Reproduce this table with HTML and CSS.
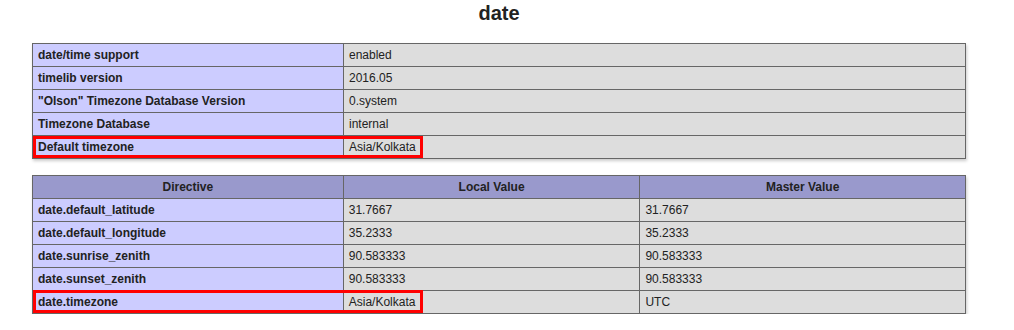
FILE: index.html
```html
<!DOCTYPE html>
<html>
<head>
<meta charset="utf-8">
<title>phpinfo - date</title>
<link rel="stylesheet" href="styles.css">
</head>
<body>
<div class="center">
  <h2 class="title">date</h2>
  <div class="wrap first">
    <table>
      <tr><td class="e">date/time support</td><td class="v">enabled</td></tr>
      <tr><td class="e">timelib version</td><td class="v">2016.05</td></tr>
      <tr><td class="e">"Olson" Timezone Database Version</td><td class="v">0.system</td></tr>
      <tr><td class="e">Timezone Database</td><td class="v">internal</td></tr>
      <tr><td class="e">Default timezone</td><td class="v">Asia/Kolkata</td></tr>
    </table>
    <div class="mark"></div>
  </div>
  <div class="wrap second">
    <table>
      <tr class="h"><th class="c1">Directive</th><th class="c2">Local Value</th><th class="c3">Master Value</th></tr>
      <tr><td class="e">date.default_latitude</td><td class="v">31.7667</td><td class="v">31.7667</td></tr>
      <tr><td class="e">date.default_longitude</td><td class="v">35.2333</td><td class="v">35.2333</td></tr>
      <tr><td class="e">date.sunrise_zenith</td><td class="v">90.583333</td><td class="v">90.583333</td></tr>
      <tr><td class="e">date.sunset_zenith</td><td class="v">90.583333</td><td class="v">90.583333</td></tr>
      <tr><td class="e">date.timezone</td><td class="v">Asia/Kolkata</td><td class="v">UTC</td></tr>
    </table>
    <div class="mark mark-tall"></div>
  </div>
</div>
</body>
</html>
```
FILE: styles.css
```css
html, body {
  margin: 0;
  padding: 0;
  background: #fff;
}
body {
  color: #222;
  font-family: "Liberation Sans", Arial, sans-serif;
}
.center {
  width: 998px;
  padding-top: 2px;
  text-align: center;
}
.title {
  margin: 0 0 18px;
  font-size: 20px;
  font-weight: bold;
  line-height: 23px;
}
.wrap {
  position: relative;
  width: 934px;
  margin: 0 auto;
  text-align: left;
}
.second {
  margin-top: 16px;
}
table {
  border-collapse: collapse;
  border: 0;
  width: 934px;
  box-shadow: 1px 2px 3px #ccc;
}
td, th {
  border: 1px solid #666;
  font-size: 12px;
  line-height: 14px;
  vertical-align: baseline;
  padding: 4px 5px;
  color: #222;
}
.e {
  background-color: #ccf;
  width: 300px;
  font-weight: bold;
}
.v {
  background-color: #ddd;
}
.h th {
  background-color: #99c;
  font-weight: bold;
  text-align: center;
}
.c1 { width: 300px; }
.c2 { width: 286px; }
.c3 { width: 315px; }
.mark {
  position: absolute;
  left: 1px;
  bottom: 1px;
  width: 390px;
  height: 22px;
  border: 3px solid #f00;
  box-sizing: border-box;
}
.mark-tall {
  height: 23px;
}
```
